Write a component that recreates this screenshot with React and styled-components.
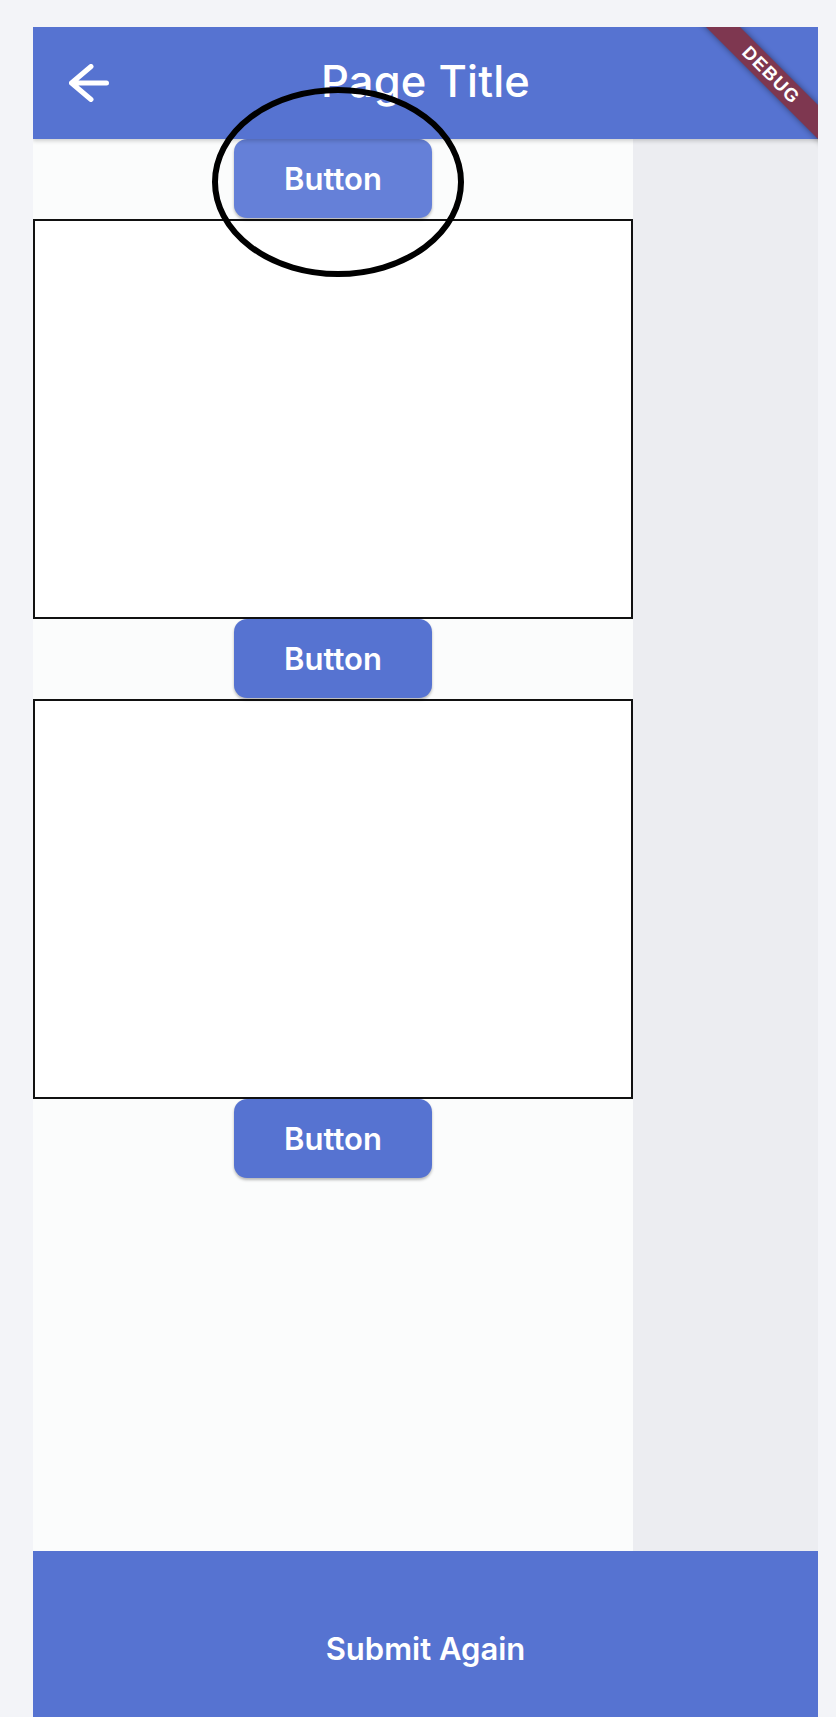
import React from "react";
import styled, { createGlobalStyle } from "styled-components";

const Global = createGlobalStyle`
  html, body { margin: 0; padding: 0; background: #f3f4f8; }
  body { font-family: Inter, "Noto Sans", sans-serif; overflow: hidden; }
  * { box-sizing: border-box; }
`;

const Frame = styled.div`
  position: relative;
  margin: 27px 0 0 33px;
  width: 785px;
  height: 1690px;
  overflow: hidden;
  display: flex;
  flex-direction: column;
`;

const AppBar = styled.header`
  height: 112px;
  flex: none;
  background: #5673d1;
  display: grid;
  grid-template-columns: 1fr auto 1fr;
  align-items: center;
  box-shadow: 0 2px 4px rgba(0, 0, 0, 0.18);
  position: relative;
  z-index: 2;
`;

const BackButton = styled.button`
  justify-self: start;
  margin-left: 36px;
  padding: 0;
  border: 0;
  background: none;
  display: flex;
  cursor: pointer;
`;

const Title = styled.h1`
  margin: 0;
  color: #ffffff;
  font-family: Inter, "Noto Sans", sans-serif;
  font-weight: 500;
  font-size: 43.5px;
  letter-spacing: 0.2px;
  line-height: 1;
  position: relative;
  top: -1px;
`;

const Body = styled.main`
  flex: 1;
  display: flex;
  min-height: 0;
`;

const Panel = styled.section`
  width: 600px;
  flex: none;
  background: #fbfcfc;
  display: flex;
  flex-direction: column;
`;

const Side = styled.aside`
  flex: 1;
  background: #ecedf1;
`;

const ButtonRow = styled.div`
  height: 80px;
  display: flex;
  justify-content: center;
  position: relative;
  z-index: 1;
`;

const ActionButton = styled.button`
  width: 198px;
  height: 79px;
  border: 0;
  border-radius: 13px;
  background: ${(p) => (p.$hover ? "#6580d8" : "#5673d1")};
  color: #ffffff;
  font-family: Inter, "Noto Sans", sans-serif;
  font-weight: 600;
  font-size: 31px;
  box-shadow: 0 2px 3px rgba(0, 0, 0, 0.28);
  cursor: pointer;
`;

const Box = styled.div`
  height: 400px;
  background: #ffffff;
  border: 2px solid #111111;
`;

const BottomBar = styled.footer`
  height: 166px;
  flex: none;
  background: #5673d1;
  display: flex;
  align-items: center;
  justify-content: center;
  padding-top: 28px;
  color: #ffffff;
  font-family: Inter, "Noto Sans", sans-serif;
  font-weight: 600;
  font-size: 31px;
`;

const Annotation = styled.svg`
  position: absolute;
  left: 174px;
  top: 55px;
  z-index: 5;
  pointer-events: none;
`;

const Banner = styled.div`
  position: absolute;
  left: 618px;
  top: 36px;
  width: 240px;
  height: 24px;
  transform: rotate(45deg);
  background: #7e3750;
  box-shadow: 0 0 6px rgba(0, 0, 0, 0.45);
  display: flex;
  align-items: center;
  justify-content: center;
  color: #ffffff;
  font-family: "Liberation Sans", Arial, sans-serif;
  font-weight: 700;
  font-size: 18.5px;
  letter-spacing: 1.2px;
  z-index: 4;
`;

function ArrowBack() {
  return (
    <svg width="40" height="38" viewBox="0 0 40 38" fill="none">
      <path
        d="M2.5 19H37.5M22 2.5L2.5 19L22 35.5"
        stroke="#ffffff"
        strokeWidth="5"
        strokeLinecap="round"
        strokeLinejoin="round"
      />
    </svg>
  );
}

export default function App() {
  return (
    <>
      <Global />
      <Frame>
        <AppBar>
          <BackButton aria-label="Back">
            <ArrowBack />
          </BackButton>
          <Title>Page Title</Title>
          <span />
        </AppBar>
        <Body>
          <Panel>
            <ButtonRow>
              <ActionButton $hover>Button</ActionButton>
            </ButtonRow>
            <Box />
            <ButtonRow>
              <ActionButton>Button</ActionButton>
            </ButtonRow>
            <Box />
            <ButtonRow>
              <ActionButton>Button</ActionButton>
            </ButtonRow>
          </Panel>
          <Side />
        </Body>
        <BottomBar>Submit Again</BottomBar>
        <Annotation width="262" height="200" viewBox="0 0 262 200">
          <ellipse cx="131" cy="100" rx="123" ry="92" fill="none" stroke="#000" strokeWidth="6" />
        </Annotation>
        <Banner>DEBUG</Banner>
      </Frame>
    </>
  );
}
